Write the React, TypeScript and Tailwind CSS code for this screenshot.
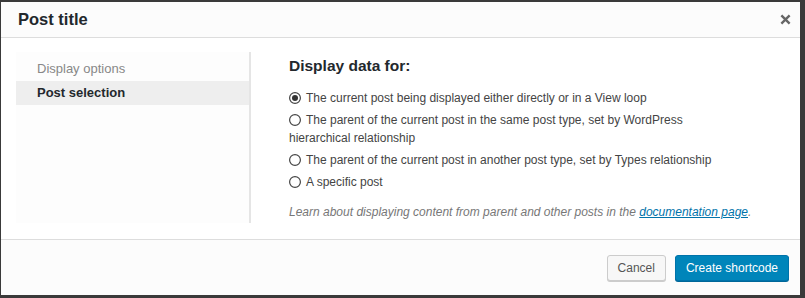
import { useState } from 'react'

const options = [
  'The current post being displayed either directly or in a View loop',
  'The parent of the current post in the same post type, set by WordPress hierarchical relationship',
  'The parent of the current post in another post type, set by Types relationship',
  'A specific post',
]

export default function App() {
  const [selected, setSelected] = useState(0)

  return (
    <div className="w-[805px] h-[298px] bg-[#3a3a3a] pt-[2px] pl-[1px] font-['Liberation_Sans',Arial,sans-serif] text-[12px] text-[#444]">
      <div className="w-[799px] h-[293px] bg-white flex flex-col overflow-hidden">
        {/* header */}
        <div className="h-[36px] shrink-0 bg-[#fcfcfc] border-b border-[#dddddd] flex items-center justify-between pl-[17px] pr-[9px]">
          <h1 className="text-[16.5px] font-bold text-[#23282d]">Post title</h1>
          <button className="text-[#666] w-[12px] h-[12px] flex items-center justify-center">
            <svg viewBox="0 0 12 12" width="11" height="11">
              <path d="M1.5 1.5 L10.5 10.5 M10.5 1.5 L1.5 10.5" stroke="currentColor" strokeWidth="2.6" strokeLinecap="butt" />
            </svg>
          </button>
        </div>

        {/* body */}
        <div className="flex-1 flex pt-[14px] pl-[15px]">
          <div className="w-[235px] h-[171px] shrink-0 border-r-2 border-[#e5e5e5] bg-[#fdfdfd] pt-[5px] text-[13px]">
            <div className="h-[24px] flex items-center pl-[21px] text-[#888]">Display options</div>
            <div className="h-[24px] flex items-center pl-[21px] bg-[#eeeeee] font-bold text-[#23282d]">Post selection</div>
          </div>

          <div className="pl-[38px] pr-[40px] pt-[4px]">
            <h2 className="text-[15.5px] font-bold text-[#23282d] leading-[20px]">Display data for:</h2>
            <div className="mt-[13px] max-w-[450px] flex flex-col gap-[4px]">
              {options.map((label, i) => (
                <label key={i} className="leading-[18px] text-[#444] cursor-pointer">
                  <span className="inline-block align-[-2px] mr-[5px]" onClick={() => setSelected(i)}>
                    <svg width="12" height="12" viewBox="0 0 12 12">
                      <circle cx="6" cy="6" r="5.4" fill="white" stroke="#444" strokeWidth="1.2" />
                      {selected === i && <circle cx="6" cy="6" r="3" fill="#333" />}
                    </svg>
                  </span>
                  {label}
                </label>
              ))}
            </div>
            <p className="mt-[12px] italic text-[#777] leading-[18px]">
              Learn about displaying content from parent and other posts in the{' '}
              <a className="text-[#0073aa] underline">documentation page</a>.
            </p>
          </div>
        </div>

        {/* footer */}
        <div className="h-[56px] shrink-0 bg-[#fcfcfc] border-t border-[#dddddd] flex items-center justify-end gap-[9px] pr-[11px] pt-[1px]">
          <button className="h-[26px] px-[10px] rounded-[3px] border border-[#cccccc] bg-[#f7f7f7] text-[#555] shadow-[0_1px_0_#ccc]">
            Cancel
          </button>
          <button className="h-[26px] px-[10px] rounded-[3px] border border-[#0073aa] bg-[#0085ba] text-white shadow-[0_1px_0_#006799]">
            Create shortcode
          </button>
        </div>
      </div>
    </div>
  )
}
